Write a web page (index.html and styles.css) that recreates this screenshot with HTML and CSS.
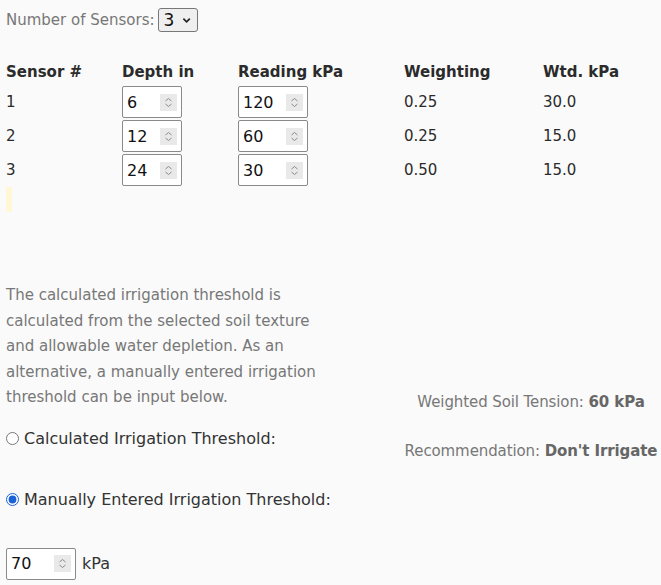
FILE: index.html
```html
<!DOCTYPE html>
<html>
<head>
  <meta charset="utf-8"/>
  <title>Soil Tension</title>
  <link rel="stylesheet" href="styles.css">
</head>
<body>
  <div class="count">
    <span class="count-label">Number of Sensors:</span>
    <div class="select">
      <span>3</span>
      <svg width="10" height="7" viewBox="0 0 10 7"><path d="M1.5 1.5 L5 5 L8.5 1.5" fill="none" stroke="#222" stroke-width="1.8"/></svg>
    </div>
  </div>

  <table class="sensors">
    <thead>
      <tr>
        <th class="c1">Sensor #</th>
        <th class="c2">Depth in</th>
        <th class="c3">Reading kPa</th>
        <th class="c4">Weighting</th>
        <th>Wtd. kPa</th>
      </tr>
    </thead>
    <tbody>
      <tr>
        <td>1</td>
        <td><div class="num"><input type="text" value="6"><span class="spin"><svg width="17" height="17" viewBox="0 0 17 17"><path d="M5.5 7 L8.5 4.5 L11.5 7 M5.5 10 L8.5 12.5 L11.5 10" fill="none" stroke="#8a8a8a" stroke-width="1"/></svg></span></div></td>
        <td><div class="num wide"><input type="text" value="120"><span class="spin"><svg width="17" height="17" viewBox="0 0 17 17"><path d="M5.5 7 L8.5 4.5 L11.5 7 M5.5 10 L8.5 12.5 L11.5 10" fill="none" stroke="#8a8a8a" stroke-width="1"/></svg></span></div></td>
        <td>0.25</td>
        <td>30.0</td>
      </tr>
      <tr>
        <td>2</td>
        <td><div class="num"><input type="text" value="12"><span class="spin"><svg width="17" height="17" viewBox="0 0 17 17"><path d="M5.5 7 L8.5 4.5 L11.5 7 M5.5 10 L8.5 12.5 L11.5 10" fill="none" stroke="#8a8a8a" stroke-width="1"/></svg></span></div></td>
        <td><div class="num wide"><input type="text" value="60"><span class="spin"><svg width="17" height="17" viewBox="0 0 17 17"><path d="M5.5 7 L8.5 4.5 L11.5 7 M5.5 10 L8.5 12.5 L11.5 10" fill="none" stroke="#8a8a8a" stroke-width="1"/></svg></span></div></td>
        <td>0.25</td>
        <td>15.0</td>
      </tr>
      <tr>
        <td>3</td>
        <td><div class="num"><input type="text" value="24"><span class="spin"><svg width="17" height="17" viewBox="0 0 17 17"><path d="M5.5 7 L8.5 4.5 L11.5 7 M5.5 10 L8.5 12.5 L11.5 10" fill="none" stroke="#8a8a8a" stroke-width="1"/></svg></span></div></td>
        <td><div class="num wide"><input type="text" value="30"><span class="spin"><svg width="17" height="17" viewBox="0 0 17 17"><path d="M5.5 7 L8.5 4.5 L11.5 7 M5.5 10 L8.5 12.5 L11.5 10" fill="none" stroke="#8a8a8a" stroke-width="1"/></svg></span></div></td>
        <td>0.50</td>
        <td>15.0</td>
      </tr>
    </tbody>
  </table>

  <div class="note"></div>

  <div class="threshold">
    <div class="left">
      <p class="info">The calculated irrigation threshold is calculated from the selected soil texture and allowable water depletion. As an alternative, a manually entered irrigation threshold can be input below.</p>
      <label class="radio calc"><input type="radio" name="mode">Calculated Irrigation Threshold:</label>
      <label class="radio manual"><input type="radio" name="mode" checked>Manually Entered Irrigation Threshold:</label>
      <div class="manual-input">
        <div class="num wide"><input type="text" value="70"><span class="spin"><svg width="17" height="17" viewBox="0 0 17 17"><path d="M5.5 7 L8.5 4.5 L11.5 7 M5.5 10 L8.5 12.5 L11.5 10" fill="none" stroke="#8a8a8a" stroke-width="1"/></svg></span></div>
        <span class="unit">kPa</span>
      </div>
    </div>
    <div class="right">
      <p class="result">Weighted Soil Tension: <b>60 kPa</b></p>
      <p class="result rec">Recommendation: <b>Don't Irrigate</b></p>
    </div>
  </div>
</body>
</html>
```

FILE: styles.css
```css
body {
  font-family: "DejaVu Sans", sans-serif;
  font-size: 15px;
  margin: 0;
  padding: 0 0 0 6px;
  background-color: #fafafa;
  color: #2b2b2b;
}

.count {
  display: flex;
  align-items: center;
  gap: 3px;
  padding-top: 8px;
}
.count-label {
  color: #777;
}
.select {
  display: flex;
  align-items: center;
  gap: 8px;
  box-sizing: border-box;
  width: 40px;
  height: 24px;
  padding: 0 5px;
  border: 1px solid #777;
  border-radius: 3px;
  background-color: #efefef;
  color: #111;
  font-size: 17px;
}

.sensors {
  border-collapse: collapse;
  margin-top: 27px;
}
.sensors th {
  text-align: left;
  font-weight: bold;
  padding: 0;
  height: 26px;
  vertical-align: middle;
}
.sensors td {
  padding: 1px 0;
  height: 32px;
  vertical-align: middle;
}
.c1, .c2 { width: 116px; }
.c3 { width: 166px; }
.c4 { width: 139px; }

.num {
  display: flex;
  align-items: center;
  box-sizing: border-box;
  width: 60px;
  height: 32px;
  border: 1px solid #8a8a8a;
  border-radius: 2px;
  background-color: #fff;
}
.num input {
  width: 30px;
  flex: 1;
  min-width: 0;
  border: none;
  outline: none;
  padding: 0 0 0 4px;
  background: none;
  font-family: inherit;
  font-size: 16px;
  color: #111;
}
.spin {
  display: flex;
  width: 17px;
  height: 17px;
  margin-right: 4px;
  background-color: #e9e9e9;
}
.num.wide {
  width: 70px;
}

.note {
  width: 6px;
  height: 25px;
  background-color: #fff7d6;
}

.threshold {
  display: flex;
  margin-top: 71px;
}
.left {
  flex: 0 0 312px;
}
.info {
  margin: 0;
  line-height: 25.6px;
  color: #777;
}
.radio {
  display: flex;
  align-items: center;
  line-height: 24px;
  font-size: 16px;
  color: #333;
  white-space: nowrap;
}
.radio input {
  width: 13px;
  height: 13px;
  margin: 0 5px 0 0;
  accent-color: #1a62d6;
}
.calc {
  margin-top: 16px;
}
.manual {
  margin-top: 37px;
}
.manual-input {
  display: flex;
  align-items: center;
  gap: 6px;
  margin-top: 36px;
}
.unit {
  font-size: 16px;
  color: #333;
}

.right {
  width: 260px;
  margin-left: auto;
  padding-top: 107px;
  text-align: center;
}
.result {
  margin: 0;
  line-height: 24px;
  color: #777;
  white-space: nowrap;
  letter-spacing: -0.1px;
}
.result b {
  color: #666;
}
.rec {
  margin-top: 25px;
}
```
